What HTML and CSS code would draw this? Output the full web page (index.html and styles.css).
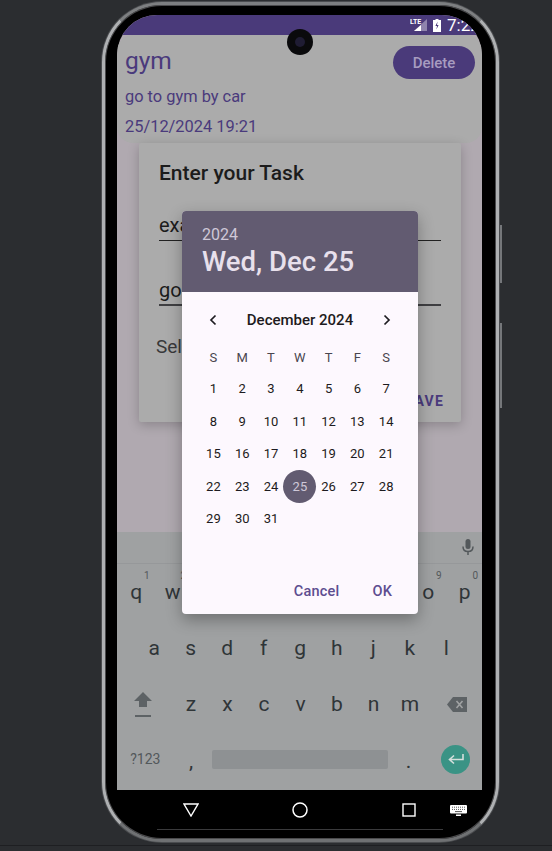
FILE: index.html
```html
<!DOCTYPE html>
<html lang="en">
  <head>
    <meta charset="UTF-8" />
    <meta name="viewport" content="width=device-width, initial-scale=1.0" />
    <title>Task date picker</title>
    <link rel="stylesheet" href="styles.css">
  </head>
  <body>
    <div class="phone">
      <span class="side-btn side-power"></span>
      <span class="side-btn side-volume"></span>
      <span class="camera"><span class="lens"></span></span>
      <div class="screen">
        <div class="status-bar">
          <svg class="lte" width="18" height="14" viewBox="0 0 18 14">
            <path d="M17 1V13H4Z" fill="#8f84ad" />
            <path d="M11 7V13H4Z" fill="#fff" />
            <text x="0" y="6" class="lte-text">LTE</text>
          </svg>
          <svg class="battery" width="8" height="13" viewBox="0 0 8 13">
            <path d="M2.5 0H5.5V1H8V13H0V1H2.5Z" fill="#fff" />
            <path d="M4.6 2.5L2.4 7H4L3.4 10.5L5.6 6H4Z" fill="#4a3a7a" />
          </svg>
          <span class="time">7:22</span>
        </div>
        <div class="task-card">
          <div class="task-head">
            <span class="task-title">gym</span>
            <span class="delete-btn">Delete</span>
          </div>
          <div class="task-line">go to gym by car</div>
          <div class="task-line">25/12/2024 19:21</div>
        </div>
        <div class="spacer"></div>
        <div class="keyboard">
          <div class="suggest">
            <svg width="12" height="18" viewBox="0 0 12 18">
              <rect x="3.5" y="0" width="5" height="10" rx="2.5" fill="#53585b" />
              <path d="M1 7.5C1 11 3 12.6 6 12.6S11 11 11 7.5M6 12.6V16" fill="none" stroke="#53585b" stroke-width="1.5" />
            </svg>
          </div>
          <div class="key-row">
            <span class="key">q<sup>1</sup></span>
            <span class="key">w<sup>2</sup></span>
            <span class="key">e<sup>3</sup></span>
            <span class="key">r<sup>4</sup></span>
            <span class="key">t<sup>5</sup></span>
            <span class="key">y<sup>6</sup></span>
            <span class="key">u<sup>7</sup></span>
            <span class="key">i<sup>8</sup></span>
            <span class="key">o<sup>9</sup></span>
            <span class="key">p<sup>0</sup></span>
          </div>
          <div class="key-row row-a">
            <span class="key">a</span>
            <span class="key">s</span>
            <span class="key">d</span>
            <span class="key">f</span>
            <span class="key">g</span>
            <span class="key">h</span>
            <span class="key">j</span>
            <span class="key">k</span>
            <span class="key">l</span>
          </div>
          <div class="key-row">
            <span class="key key-wide key-shift">
              <svg width="20" height="30" viewBox="0 0 20 30">
                <path d="M10 3L19 12H14V18H6V12H1Z" fill="#5d6265" />
                <rect x="2" y="26" width="16" height="2" fill="#5d6265" />
              </svg>
            </span>
            <span class="key">z</span>
            <span class="key">x</span>
            <span class="key">c</span>
            <span class="key">v</span>
            <span class="key">b</span>
            <span class="key">n</span>
            <span class="key">m</span>
            <span class="key key-wide key-del">
              <svg width="20" height="15" viewBox="0 0 20 15">
                <path d="M6 0H20V15H6L0 7.5Z" fill="#5d6265" />
                <path d="M9.5 4L15.5 11M15.5 4L9.5 11" stroke="#a0a2a3" stroke-width="1.6" />
              </svg>
            </span>
          </div>
          <div class="key-row row-bottom">
            <span class="key key-wide key-sym">?123</span>
            <span class="key key-punct">,</span>
            <span class="space-bar"></span>
            <span class="key key-punct">.</span>
            <span class="key key-wide">
              <span class="enter-key">
                <svg width="16" height="11" viewBox="0 0 16 11">
                  <path d="M15 0V5.5H2M6 1.5L1.5 5.5L6 9.5" fill="none" stroke="#d5dfdc" stroke-width="1.6" />
                </svg>
              </span>
            </span>
          </div>
        </div>

        <div class="task-dialog">
          <div class="dialog-title">Enter your Task</div>
          <div class="field">example</div>
          <div class="field field-active">go to gym</div>
          <div class="select-label">Select date</div>
          <div class="dialog-actions">SAVE</div>
        </div>

        <div class="date-picker">
          <div class="picker-head">
            <div class="picker-year">2024</div>
            <div class="picker-date">Wed, Dec 25</div>
          </div>
          <div class="picker-month">
            <svg width="10" height="12" viewBox="0 0 10 12">
              <path d="M7.5 1.5L3 6L7.5 10.5" fill="none" stroke="#1d1b20" stroke-width="1.7" />
            </svg>
            <span>December 2024</span>
            <svg width="10" height="12" viewBox="0 0 10 12">
              <path d="M2.5 1.5L7 6L2.5 10.5" fill="none" stroke="#1d1b20" stroke-width="1.7" />
            </svg>
          </div>
          <div class="picker-grid">
            <span class="dow">S</span><span class="dow">M</span><span class="dow">T</span><span class="dow">W</span><span class="dow">T</span><span class="dow">F</span><span class="dow">S</span>
            <span>1</span><span>2</span><span>3</span><span>4</span><span>5</span><span>6</span><span>7</span>
            <span>8</span><span>9</span><span>10</span><span>11</span><span>12</span><span>13</span><span>14</span>
            <span>15</span><span>16</span><span>17</span><span>18</span><span>19</span><span>20</span><span>21</span>
            <span>22</span><span>23</span><span>24</span><span class="selected">25</span><span>26</span><span>27</span><span>28</span>
            <span>29</span><span>30</span><span>31</span>
          </div>
          <div class="picker-actions">
            <span>Cancel</span>
            <span>OK</span>
          </div>
        </div>
      </div>
      <div class="nav-bar">
        <svg class="nav-back" width="16" height="14" viewBox="0 0 16 14">
          <path d="M1 1H15L8 13Z" fill="none" stroke="#fff" stroke-width="1.4" />
        </svg>
        <svg class="nav-home" width="16" height="16" viewBox="0 0 16 16">
          <circle cx="8" cy="8" r="7" fill="none" stroke="#fff" stroke-width="1.5" />
        </svg>
        <svg class="nav-recent" width="14" height="14" viewBox="0 0 14 14">
          <rect x="1" y="1" width="12" height="12" fill="none" stroke="#fff" stroke-width="1.4" />
        </svg>
        <svg class="nav-kbd" width="17" height="11" viewBox="0 0 17 11">
          <rect width="17" height="8.5" rx="1" fill="#fff" />
          <path d="M2 2.2H15M2 4.4H15" stroke="#555" stroke-width="1" stroke-dasharray="1 1" />
          <path d="M5 6.6H12" stroke="#555" stroke-width="1" />
          <rect x="6" y="9.5" width="5" height="1.5" fill="#fff" />
        </svg>
      </div>
    </div>
    <div class="page-line"></div>
  </body>
</html>
```

FILE: styles.css
```css
* {
  margin: 0;
  padding: 0;
  box-sizing: border-box;
}

body {
  position: relative;
  font-family: Roboto, "Liberation Sans", sans-serif;
  background-color: #2b2d30;
  width: 552px;
  height: 851px;
  overflow: hidden;
}

/* margin-top of the phone would collapse through body otherwise */
body::before {
  content: "";
  display: block;
  height: 0.01px;
}

.page-line {
  position: absolute;
  left: 0;
  right: 0;
  top: 845px;
  height: 1px;
  background-color: #1e1f22;
}

.phone {
  position: relative;
  width: 397px;
  height: 840px;
  margin: 2px 0 0 102px;
  padding: 10px 14px 0 12px;
  background-color: #000;
  border: 3px solid;
  border-color: #7d7f81 #aeb0b2 #6f7173;
  border-radius: 60px;
  box-shadow: 0 0 0 1px #4a4c4f, inset 0 0 0 1px #4a4a4c;
}

.side-btn {
  position: absolute;
  right: -6px;
  width: 2px;
  background-color: #75777a;
}

.side-power {
  top: 220px;
  height: 58px;
}

.side-volume {
  top: 318px;
  height: 85px;
}

.camera {
  position: absolute;
  z-index: 5;
  left: 182px;
  top: 24px;
  width: 26px;
  height: 26px;
  border-radius: 50%;
  background-color: #0a0a0c;
  display: flex;
  align-items: center;
  justify-content: center;
}

.lens {
  width: 10px;
  height: 10px;
  border-radius: 50%;
  background-color: #1f1c33;
}

.screen {
  position: relative;
  width: 365px;
  height: 775px;
  display: flex;
  flex-direction: column;
  overflow: hidden;
  background-color: #b0a9b0;
  border-radius: 40px 40px 0 0;
}

.status-bar {
  height: 20px;
  flex-shrink: 0;
  background-color: #4a3a7a;
  display: flex;
  align-items: center;
  justify-content: flex-end;
  gap: 5px;
}

.lte-text {
  font-size: 7px;
  font-weight: 700;
  fill: #fff;
}

.time {
  color: #fff;
  font-size: 17px;
  width: 35px;
  margin-left: 1px;
  white-space: nowrap;
  overflow: hidden;
}

.task-card {
  flex-shrink: 0;
  height: 108px;
  padding: 11px 7px 0 8px;
  background-color: #ababab;
  border-radius: 16px;
  color: #4a3a7c;
}

.task-head {
  display: flex;
  align-items: flex-start;
  justify-content: space-between;
  height: 36px;
}

.task-title {
  font-size: 24.5px;
  line-height: 30px;
}

.delete-btn {
  width: 82px;
  height: 33px;
  border-radius: 17px;
  background-color: #4a3a7a;
  color: #a79cc0;
  font-size: 15px;
  font-weight: 500;
  display: flex;
  align-items: center;
  justify-content: center;
}

.task-line {
  font-size: 16.4px;
  line-height: 30px;
}

.spacer {
  flex: 1;
}

.keyboard {
  flex-shrink: 0;
  height: 258px;
  background-color: #9fa1a2;
  color: #2f3538;
}

.suggest {
  height: 32px;
  padding-right: 8px;
  display: flex;
  align-items: center;
  justify-content: flex-end;
  border-bottom: 1px solid #96989a;
}

.key-row {
  height: 56px;
  padding-left: 1px;
  display: flex;
  align-items: center;
}

.row-a {
  padding-left: 19px;
}

.row-bottom {
  margin-top: -1px;
}

.key {
  position: relative;
  width: 36.5px;
  flex-shrink: 0;
  text-align: center;
  font-size: 21px;
}

.key sup {
  position: absolute;
  right: 5px;
  top: -10px;
  font-size: 10px;
  color: #53585b;
}

.key-wide {
  width: 54.75px;
  display: flex;
  justify-content: center;
  align-items: center;
}

.key-wide svg {
  display: block;
}

.key-shift svg {
  margin-right: 4px;
}

.key-del svg {
  margin-left: 2px;
}

.key-sym {
  font-size: 14px;
  color: #53585b;
}

.key-punct {
  padding-top: 4px;
}

.space-bar {
  width: 176px;
  margin: 0 2.5px;
  height: 19px;
  border-radius: 2px;
  background-color: #8e9193;
}

.enter-key {
  width: 29px;
  height: 29px;
  margin-left: 3px;
  border-radius: 50%;
  background-color: #3a9385;
  display: flex;
  align-items: center;
  justify-content: center;
}

.task-dialog {
  position: absolute;
  left: 22px;
  top: 128px;
  width: 322px;
  height: 279px;
  padding: 18px 20px 0;
  background-color: #ababab;
  border-radius: 2px;
  box-shadow: 0 3px 12px rgba(0, 0, 0, 0.22);
  color: #1c1c1c;
}

.dialog-title {
  font-size: 21px;
  font-weight: 500;
  line-height: 24px;
  margin-bottom: 27px;
}

.field {
  height: 29px;
  font-size: 20px;
  line-height: 27px;
  border-bottom: 1px solid #222;
  margin-bottom: 36px;
}

.field-active {
  border-bottom: 2px solid #3f3f42;
  margin-bottom: 29px;
}

.select-label {
  margin-left: -3px;
  font-size: 19px;
  color: #38383a;
}

.dialog-actions {
  margin-top: 35px;
  margin-right: -3px;
  text-align: right;
  font-size: 14px;
  font-weight: 700;
  letter-spacing: 1.2px;
  color: #4a3a7c;
}

.date-picker {
  position: absolute;
  left: 65px;
  top: 196px;
  width: 236px;
  height: 403px;
  background-color: #fdf8fe;
  border-radius: 4px;
  overflow: hidden;
  box-shadow: 0 6px 16px rgba(0, 0, 0, 0.3);
  z-index: 2;
}

.picker-head {
  height: 81px;
  padding: 15px 20px 0;
  background-color: #625b71;
  color: #e8e0ec;
}

.picker-year {
  font-size: 16px;
  line-height: 18px;
  color: #cfc8d8;
}

.picker-date {
  font-size: 27.5px;
  font-weight: 500;
  line-height: 35px;
}

.picker-month {
  height: 56px;
  padding: 0 26px;
  display: flex;
  align-items: center;
  justify-content: space-between;
  font-size: 15px;
  font-weight: 500;
  color: #1d1b20;
}

.picker-grid {
  display: grid;
  grid-template-columns: repeat(7, 28.8px);
  grid-auto-rows: 32.5px;
  margin-top: -8px;
  padding-left: 17px;
  font-size: 13px;
  color: #1d1b20;
}

.picker-grid span {
  display: flex;
  align-items: center;
  justify-content: center;
}

.picker-grid .dow {
  padding-top: 2px;
  color: #49454f;
}

.picker-grid .selected {
  width: 33px;
  height: 33px;
  margin-left: -2px;
  border-radius: 50%;
  background-color: #625b71;
  color: #cfc8d8;
}

.picker-actions {
  position: absolute;
  right: 26px;
  bottom: 14px;
  display: flex;
  gap: 33px;
  font-size: 14.5px;
  font-weight: 500;
  letter-spacing: 0.2px;
  color: #5d4d90;
}

.nav-bar {
  position: relative;
  width: 365px;
  height: 40px;
}

.nav-bar::after {
  content: "";
  position: absolute;
  left: 40px;
  right: 39px;
  bottom: 0;
  height: 1px;
  background-color: #3a3a3c;
}

.nav-back,
.nav-home,
.nav-recent,
.nav-kbd {
  position: absolute;
}

.nav-back {
  left: 66px;
  top: 13px;
}

.nav-home {
  left: 175px;
  top: 12px;
}

.nav-recent {
  left: 285px;
  top: 13px;
}

.nav-kbd {
  left: 333px;
  top: 15px;
}
```
